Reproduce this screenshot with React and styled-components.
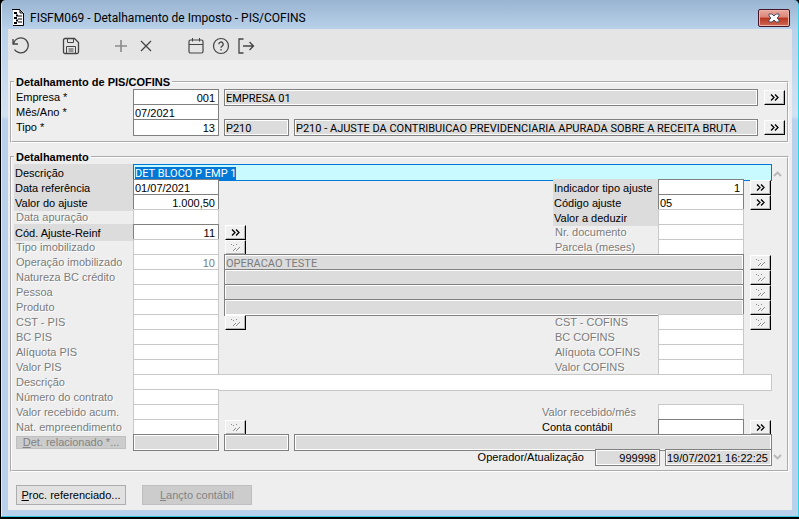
import React, { useEffect, useRef } from "react";
import styled, { createGlobalStyle } from "styled-components";

// "»" glyph of the lookup buttons, embossed when the button is disabled
const LookupIcon = ({ disabled }) => (
  <svg width="9" height="7" viewBox="0 0 9 7" fill="none" aria-hidden="true">
    {disabled ? (
      <g shapeRendering="crispEdges">
        <path d="M0 0h1v1h-1zM2 1h1v1h-1zM5 0h1v1h-1zM4 4h1v1h-1zM3 5h1v1h-1zM2 6h1v1h-1zM8 3h1v1h-1zM7 4h1v1h-1zM6 5h1v1h-1zM5 6h1v1h-1z" fill="#8c8c8c" />
        <path d="M5 5h1v1h-1zM4 6h1v1h-1zM8 5h1v1h-1zM7 6h1v1h-1z" fill="#fff" />
      </g>
    ) : (
      <path d="M1 .5l3 3-3 3M5 .5l3 3-3 3" stroke="#000" strokeWidth="1.3" />
    )}
  </svg>
);

const Lookup = ({ disabled, name }) => (
  <LookupButton type="button" disabled={disabled} aria-label={`Consultar ${name}`}>
    <LookupIcon disabled={disabled} />
  </LookupButton>
);

const Tool = ({ label, muted, children }) => (
  <ToolButton type="button" aria-label={label} $muted={muted}>
    <svg width="18" height="18" viewBox="0 0 18 18" fill="none" stroke="currentColor" aria-hidden="true">
      {children}
    </svg>
  </ToolButton>
);

// Left label + value, shared by every row of the detail form
const LeftField = ({ id, label, state = "off", value = "", right }) => (
  <>
    <Label htmlFor={id} $state={state}>{label}</Label>
    <Field id={id} defaultValue={value} disabled={state === "off"} $right={right} />
  </>
);

const RightField = ({ id, label, state = "off", value = "", right, lookup, wide }) => (
  <>
    <Spacer />
    <RightLabel htmlFor={id} $state={state} $wide={wide}>{label}</RightLabel>
    <Field id={id} defaultValue={value} disabled={state === "off"} $right={right} />
    <Slot>{lookup && <Lookup name={label} disabled={state === "off"} />}</Slot>
  </>
);

const describedRows = [
  { id: "operacao", label: "Operação imobilizado", value: "10", text: "OPERACAO TESTE" },
  { id: "natureza", label: "Natureza BC crédito" },
  { id: "pessoa", label: "Pessoa" },
  { id: "produto", label: "Produto" },
];

const taxRows = [
  { id: "bc", label: "BC" },
  { id: "aliquota", label: "Alíquota" },
  { id: "valor", label: "Valor" },
];

const App = () => {
  const descricaoRef = useRef(null);

  useEffect(() => {
    descricaoRef.current.focus();
    descricaoRef.current.select();
  }, []);

  return (
    <Window>
      <GlobalStyle />
      <TitleBar>
        <svg width="13" height="17" viewBox="0 0 13 17" aria-hidden="true">
          <path d="M1 1h8l3 3v12H1z" fill="#fff" />
          <path d="M0 .5h8M11.5 4v12.5H1" stroke="#000" fill="none" />
          <path d="M8 1v3h3z" stroke="#000" fill="#fff" />
          <path d="M2 4h3M4 6.500h2M2 9h3M4 11.500h2M2 14h3" stroke="#000" strokeWidth="2" />
          <path d="M6 7h4M6 10h4M6 13h4" stroke="#000" />
        </svg>
        <Title>FISFM069 - Detalhamento de Imposto - PIS/COFINS</Title>
        <CloseButton type="button" aria-label="Fechar">
          <svg width="12" height="10" viewBox="0 0 12 10" aria-hidden="true">
            <path d="M1 1h3l2 2 2-2h3v2L9 5l2 2v2H8L6 7 4 9H1V7l2-2-2-2z" fill="#fff" stroke="#4a5064" />
          </svg>
        </CloseButton>
      </TitleBar>

      <Client>
        <Toolbar>
          <ToolGroup>
            <Tool label="Desfazer">
              <path d="M1 2v5h5M1.500 6.500A7.500 7.500 0 1 1 2.500 12.500" strokeWidth="1.300" />
            </Tool>
          </ToolGroup>
          <ToolGroup>
            <Tool label="Salvar">
              <path d="M3 1.500h9.500l4 4V15a1.500 1.500 0 0 1-1.500 1.500H3A1.500 1.500 0 0 1 1.500 15V3A1.500 1.500 0 0 1 3 1.500z" strokeWidth="1.300" />
              <path d="M5.500 1.500v4h6v-4M4.500 16.500v-7h9v7M6.500 12h5M6.500 14h5" />
            </Tool>
          </ToolGroup>
          <ToolGroup>
            <Tool label="Incluir" muted>
              <path d="M9 3v12M3 9h12" strokeWidth="1.600" />
            </Tool>
            <Tool label="Excluir">
              <path d="M4 4l10 10M14 4L4 14" strokeWidth="1.300" />
            </Tool>
          </ToolGroup>
          <ToolGroup>
            <Tool label="Calendário">
              <rect x="2" y="3" width="14" height="13" rx="1.500" strokeWidth="1.200" />
              <path d="M2 7.500h14M5.500 1v3.500M12.500 1v3.500" />
            </Tool>
            <Tool label="Ajuda">
              <circle cx="9" cy="9" r="7.500" strokeWidth="1.200" />
              <path d="M6.800 7.200a2.200 2.200 0 1 1 3.300 1.900C9.300 9.500 9 9.900 9 10.800M9 12v1.400" strokeWidth="1.300" />
            </Tool>
            <Tool label="Sair">
              <path d="M6.500 2H2v14h4.500M6 9h10M12.500 5L16.500 9l-4 4" strokeWidth="1.300" />
            </Tool>
          </ToolGroup>
        </Toolbar>

        <Form onSubmit={(e) => e.preventDefault()}>
          <Group>
            <legend>Detalhamento de PIS/COFINS</legend>
            <Rows>
              <Row>
                <LeftField id="empresa" label="Empresa *" state="plain" value="001" right />
                <Readout aria-label="Nome da empresa" readOnly defaultValue="EMPRESA 01" />
                <Slot><Lookup name="Empresa" /></Slot>
              </Row>
              <Row>
                <LeftField id="mesAno" label="Mês/Ano *" state="plain" value="07/2021" />
              </Row>
              <Row>
                <LeftField id="tipo" label="Tipo *" state="plain" value="13" right />
                <Readout aria-label="Código do tipo" readOnly defaultValue="P210" $size="code" />
                <Readout
                  aria-label="Descrição do tipo"
                  readOnly
                  defaultValue="P210 - AJUSTE DA CONTRIBUICAO PREVIDENCIARIA APURADA SOBRE A RECEITA BRUTA"
                />
                <Slot><Lookup name="Tipo" /></Slot>
              </Row>
            </Rows>
          </Group>

          <Group $scroll>
            <legend>Detalhamento</legend>
            <ScrollArea>
              <Rows>
                <Row>
                  <Label htmlFor="descricao" $state="on">Descrição</Label>
                  <FocusField id="descricao" ref={descricaoRef} defaultValue="DET BLOCO P EMP 1" />
                </Row>
                <Row>
                  <LeftField id="dataRef" label="Data referência" state="on" value="01/07/2021" />
                  <RightField id="indicador" label="Indicador tipo ajuste" state="on" value="1" right lookup />
                </Row>
                <Row>
                  <LeftField id="valorAjuste" label="Valor do ajuste" state="on" value="1.000,50" right />
                  <RightField id="codigoAjuste" label="Código ajuste" state="on" value="05" lookup />
                </Row>
                <Row>
                  <LeftField id="dataApuracao" label="Data apuração" />
                  <Spacer />
                  <RightLabel htmlFor="deduzir" $state="on">Valor a deduzir</RightLabel>
                  <Field id="deduzir" disabled />
                  <Slot />
                </Row>
                <Row>
                  <LeftField id="reinf" label="Cód. Ajuste-Reinf" state="on" value="11" right />
                  <Slot><Lookup name="Cód. Ajuste-Reinf" /></Slot>
                  <RightField id="documento" label="Nr. documento" />
                </Row>
                <Row>
                  <LeftField id="tipoImob" label="Tipo imobilizado" />
                  <Slot><Lookup name="Tipo imobilizado" disabled /></Slot>
                  <RightField id="parcela" label="Parcela (meses)" />
                </Row>
                {describedRows.map(({ id, label, value, text }) => (
                  <Row key={id}>
                    <LeftField id={id} label={label} value={value} right />
                    <Readout aria-label={`Descrição ${label}`} disabled defaultValue={text} />
                    <Slot><Lookup name={label} disabled /></Slot>
                  </Row>
                ))}
                <Row>
                  <LeftField id="cstPis" label="CST - PIS" />
                  <Slot><Lookup name="CST - PIS" disabled /></Slot>
                  <RightField id="cstCofins" label="CST - COFINS" lookup />
                </Row>
                {taxRows.map(({ id, label }) => (
                  <Row key={id}>
                    <LeftField id={`${id}Pis`} label={`${label} PIS`} />
                    <RightField id={`${id}Cofins`} label={`${label} COFINS`} />
                  </Row>
                ))}
                <Row>
                  <Label htmlFor="descricao2" $state="off">Descrição</Label>
                  <Field id="descricao2" disabled $grow />
                </Row>
                <Row>
                  <LeftField id="contrato" label="Número do contrato" />
                </Row>
                <Row>
                  <LeftField id="recebidoAcum" label="Valor recebido acum." />
                  <RightField id="recebidoMes" label="Valor recebido/mês" wide />
                </Row>
                <Row>
                  <LeftField id="empreendimento" label="Nat. empreendimento" />
                  <Slot><Lookup name="Nat. empreendimento" disabled /></Slot>
                  <RightField id="conta" label="Conta contábil" state="plain" lookup wide />
                </Row>
                <Row>
                  <LabelCell>
                    <DetailButton type="button" disabled><u>D</u>et. relacionado *...</DetailButton>
                  </LabelCell>
                  <Readout aria-label="Det. relacionado" disabled $size="first" />
                  <Readout aria-label="Código relacionado" disabled $size="code" />
                  <Readout aria-label="Descrição relacionado" disabled />
                </Row>
                <Row>
                  <Spacer />
                  <StampLabel htmlFor="operador">Operador/Atualização</StampLabel>
                  <StampField id="operador" readOnly defaultValue="999998" $size="code" $right />
                  <StampField aria-label="Atualização" readOnly defaultValue="19/07/2021 16:22:25" $size="stamp" />
                </Row>
              </Rows>
              <ScrollBar aria-hidden="true">
                <svg width="9" height="6" viewBox="0 0 9 6" fill="none">
                  <path d="M1 5l3.500-3.500L8 5" stroke="#b8b8b8" strokeWidth="1.800" />
                </svg>
                <svg width="9" height="6" viewBox="0 0 9 6" fill="none">
                  <path d="M1 1l3.500 3.500L8 1" stroke="#b8b8b8" strokeWidth="1.800" />
                </svg>
              </ScrollBar>
            </ScrollArea>
          </Group>

          <Footer>
            <FooterButton type="button"><u>P</u>roc. referenciado...</FooterButton>
            <FooterButton type="button" disabled><u>L</u>ançto contábil</FooterButton>
          </Footer>
        </Form>
      </Client>
    </Window>
  );
};

export default App;

// Styled Components
const GlobalStyle = createGlobalStyle`
  * {
    box-sizing: border-box;
  }
  body {
    margin: 0;
    background: #000;
  }
  body, input, button {
    font-family: "Liberation Sans", Arial, sans-serif;
    font-size: 11px;
  }
`;

const Window = styled.div`
  margin: 0 0 2px 1px;
  padding: 0 6px 6px;
  border-left: 1px solid #dfeaf5;
  border-right: 1px solid #35d5f0;
  border-bottom: 1px solid #35c5dc;
  border-radius: 5px 5px 0 0;
  background: linear-gradient(#99b4d1, #b9d1ea 29px, #d3e2f2 116px, #b9d1ea 120px);
`;

const TitleBar = styled.header`
  display: flex;
  align-items: center;
  height: 29px;
  padding: 6px 2px 0 4px;
`;

const Title = styled.h1`
  flex: 1;
  margin: 0;
  padding-left: 5px;
  font: 12px Roboto, sans-serif;
  color: #000;
`;

const CloseButton = styled.button`
  display: flex;
  align-items: center;
  justify-content: center;
  width: 32px;
  height: 18px;
  padding: 0;
  border: 1px solid #43162a;
  border-radius: 2px;
  background: linear-gradient(#e9a99f, #dc8577 45%, #b8351f 50%, #cf6a55);
  box-shadow: inset 0 0 0 1px #eeb4aa;
`;

const Client = styled.main`
  background: #eee;
`;

const Toolbar = styled.div`
  display: flex;
  gap: 25px;
  height: 31px;
  background: #e5e5e5;
`;

const ToolGroup = styled.div`
  display: flex;
`;

const ToolButton = styled.button`
  display: flex;
  align-items: center;
  justify-content: center;
  width: 25px;
  padding: 2px 0 0;
  border: none;
  background: none;
  color: ${({ $muted }) => ($muted ? "#8a8a8a" : "#444")};
`;

const Form = styled.form`
  padding: 15px 3px 5px 2px;
`;

const Group = styled.fieldset`
  min-width: 0;
  margin: 0 0 7px;
  padding: ${({ $scroll }) => ($scroll ? "0 0 6px 2px" : "0 1px 7px 2px")};
  border: 2px groove #fff;

  legend {
    height: 14px;
    padding: 0 2px;
    font-weight: bold;
    line-height: 14px;
  }
`;

const ScrollArea = styled.div`
  display: flex;
`;

const Rows = styled.div`
  display: flex;
  flex: 1;
  flex-direction: column;
  min-width: 0;
`;

// Fields are two pixels taller than their row, so that neighbours share a border
const Row = styled.div`
  display: flex;
  align-items: flex-start;
  height: 15px;
`;

const Spacer = styled.div`
  flex: 1;
`;

const Slot = styled.div`
  width: 28px;
  padding: 1px 0 0 6px;
`;

const Label = styled.label`
  flex: none;
  width: 119px;
  height: 17px;
  padding-left: ${({ $state }) => ($state === "on" ? 1 : 2)}px;
  line-height: ${({ $state }) => ($state === "on" ? 18 : 16)}px;
  white-space: nowrap;
  color: ${({ $state }) => ($state === "off" ? "#7b7b7b" : "#000")};
  background: ${({ $state }) => ($state === "on" ? "#dcdcdc" : "transparent")};
  text-shadow: ${({ $state }) => ($state === "off" ? "1px 1px #fff" : "none")};
`;

const RightLabel = styled(Label)`
  width: ${({ $wide }) => ($wide ? 118 : 105)}px;
`;

const StampLabel = styled.label`
  padding-right: 11px;
  line-height: 16px;
`;

const LabelCell = styled.div`
  width: 119px;
  padding: 2px 0 0 2px;
`;

const Field = styled.input`
  flex: ${({ $grow }) => ($grow ? 1 : "none")};
  width: 86px;
  min-width: 0;
  height: 17px;
  padding: 1px ${({ $right }) => ($right ? 3 : 1)}px 0;
  border: 1px solid #808080;
  border-radius: 0;
  background: #fff;
  color: #000;
  text-align: ${({ $right }) => ($right ? "right" : "left")};
  outline: none;

  &:disabled {
    border-color: #c8c8c8;
    color: #7b7b7b;
  }
`;

const FocusField = styled(Field)`
  flex: 1;
  border-color: #0078d7;
  background: #c8faff;
  font-family: Roboto, sans-serif;

  &::selection {
    background: #0078d7;
    color: #fff;
  }
`;

const readoutWidths = { first: 86, code: 65, stamp: 107 };

const Readout = styled(Field)`
  flex: ${({ $size }) => ($size ? "none" : 1)};
  width: ${({ $size }) => readoutWidths[$size] || 0}px;
  background: #dcdcdc;
  box-shadow: inset 0 0 0 1px #fff;
  font-family: Roboto, sans-serif;

  input + & {
    margin-left: 5px;
  }

  &:disabled {
    border-color: #808080;
  }
`;

const StampField = styled(Readout)`
  font-family: "Liberation Sans", Arial, sans-serif;
`;

const LookupButton = styled.button`
  display: flex;
  align-items: center;
  justify-content: center;
  width: 21px;
  height: 15px;
  padding: 0;
  border: 1px solid;
  border-color: #fff #000 #000 #fff;
  background: #f0f0f0;
  box-shadow: inset -1px -1px #b4b4b4;
`;

const DetailButton = styled.button`
  display: block;
  width: 110px;
  height: 13px;
  padding: 0;
  border: 1px solid #bfbfbf;
  background: #ccc;
  color: #838383;
  line-height: 11px;
`;

const ScrollBar = styled.div`
  display: flex;
  flex-direction: column;
  justify-content: space-between;
  width: 15px;
  padding: 7px 0 4px 1px;
`;

const Footer = styled.footer`
  display: flex;
  gap: 16px;
  padding: 6px 6px 0;
`;

const FooterButton = styled.button`
  width: 110px;
  height: 20px;
  padding: 0;
  border: 1px solid #adadad;
  background: #e1e1e1;
  color: #000;

  &:disabled {
    border-color: #bfbfbf;
    background: #ccc;
    color: #838383;
  }
`;
